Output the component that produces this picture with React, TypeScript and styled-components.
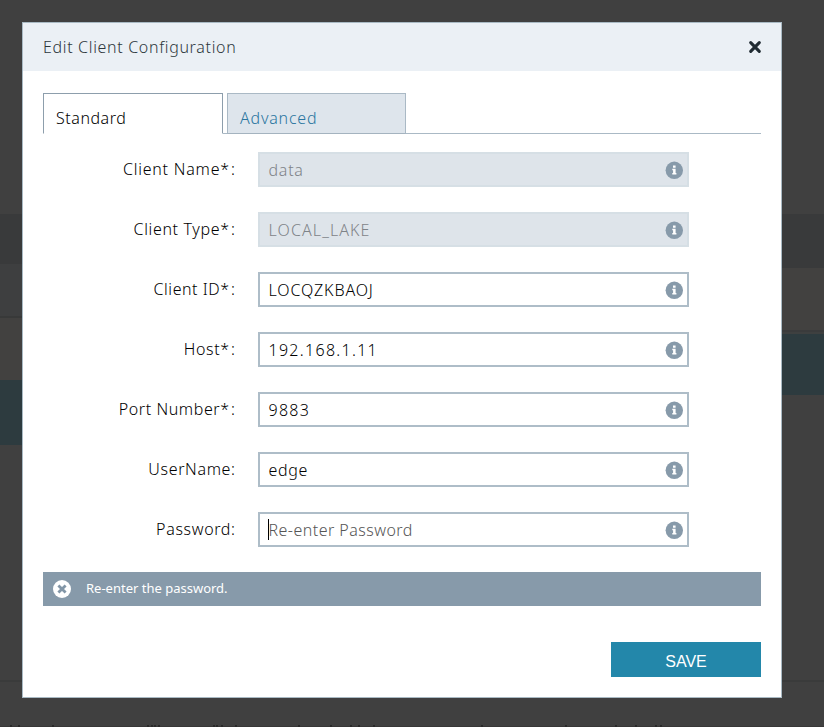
import React from "react";
import styled, { createGlobalStyle } from "styled-components";

const Global = createGlobalStyle`
  *, *::before, *::after { box-sizing: border-box; }
  body { margin: 0; overflow: hidden; background: #404040; font-family: "Noto Sans", "Open Sans", sans-serif; }
`;

const Page = styled.div`
  display: grid;
  width: 824px;
  height: 727px;
  overflow: hidden;
  background: #404040;
  > * { grid-area: 1 / 1; }
`;

const Backdrop = styled.div`
  display: grid;
  grid-template-columns: 1fr 1fr;
  grid-template-rows: 680px 2px 1fr;
  min-height: 0;
`;

const Pane = styled.div`
  display: flex;
  flex-direction: column;
`;

const Band = styled.div<{ $h: number; $c: string }>`
  flex: none;
  height: ${(p) => p.$h}px;
  background: ${(p) => p.$c};
`;

const Divider = styled.div`
  grid-column: 1 / -1;
  background: #3a3b3b;
`;

const Footnote = styled.svg`
  grid-column: 1 / -1;
  align-self: end;
  display: block;
`;

const Overlay = styled.div`
  z-index: 1;
  padding: 22px 42px 29px 22px;
  display: flex;
`;

const Dialog = styled.section`
  flex: 1;
  display: flex;
  flex-direction: column;
  background: #fff;
  border: 1px solid #a9bac4;
`;

const Header = styled.header`
  height: 48px;
  flex: none;
  display: flex;
  align-items: center;
  justify-content: space-between;
  padding: 0 19px 0 20px;
  background: #ebf0f5;
`;

const Text = styled.span<{ $ls?: number }>`
  letter-spacing: ${(p) => p.$ls ?? 0}px;
  white-space: pre;
`;

const Title = styled.h1`
  margin: 0;
  font-size: 16px;
  font-weight: 300;
  line-height: 24px;
  color: #2d373c;
`;

const IconButton = styled.button`
  border: 0;
  padding: 0;
  background: none;
  display: flex;
`;

const Body = styled.div`
  padding: 22px 20px 0;
  display: flex;
  flex-direction: column;
`;

const Tabs = styled.div`
  display: flex;
  height: 41px;
`;

const Tab = styled.button<{ $active?: boolean }>`
  width: ${(p) => (p.$active ? 180 : 179)}px;
  padding: 9px 12px 0;
  border: 1px solid ${(p) => (p.$active ? "#8d9eac" : "#aab9c5")};
  border-bottom-color: ${(p) => (p.$active ? "transparent" : "#a4b3bf")};
  background: ${(p) => (p.$active ? "#fff" : "#dee5ec")};
  color: ${(p) => (p.$active ? "#000" : "#2a75a0")};
  font: 300 16px/24px "Noto Sans", sans-serif;
  text-align: left;
`;

const TabGap = styled.div`
  width: 4px;
  border-bottom: 1px solid #aab9c5;
`;

const TabRest = styled(TabGap)`
  flex: 1;
`;

const Form = styled.div`
  display: flex;
  flex-direction: column;
  gap: 25px;
  padding-top: 18px;
`;

const Row = styled.div`
  display: grid;
  grid-template-columns: 192px 431px;
  column-gap: 23px;
  height: 35px;
`;

const Label = styled.label`
  text-align: right;
  font-size: 16px;
  font-weight: 300;
  line-height: 35px;
  color: #000;
`;

const Required = styled.span`
  margin-right: 2px;
`;

const Field = styled.div<{ $disabled?: boolean; $hint?: boolean }>`
  display: flex;
  align-items: center;
  justify-content: space-between;
  padding: 0 4px 0 8px;
  border: 2px solid ${(p) => (p.$disabled ? "#d6dfe5" : "#aebdc8")};
  background: ${(p) => (p.$disabled ? "#dee4ea" : "#fff")};
  color: ${(p) => (p.$disabled ? "#7e8388" : p.$hint ? "#555" : "#000")};
  font-size: 16px;
  font-weight: 300;
  line-height: 24px;
`;

const Value = styled.span`
  display: flex;
  align-items: center;
  padding-left: 0.5px;
`;

const Caret = styled.i`
  width: 1px;
  height: 21px;
  margin-left: -0.5px;
  margin-right: -0.5px;
  background: #000;
`;

const Alert = styled.div`
  margin-top: 25px;
  height: 34px;
  display: flex;
  align-items: center;
  gap: 15px;
  padding: 0 10px;
  background: #879aaa;
  color: #fff;
  font-size: 13px;
  font-weight: 400;
`;

const AlertText = styled.span`
  padding-bottom: 2px;
`;

const Save = styled.button`
  align-self: flex-end;
  margin-top: 36px;
  width: 150px;
  height: 35px;
  padding: 4px 0 0;
  border: 0;
  background: #2387aa;
  color: #fff;
  font: 400 16px/24px "Liberation Sans", Arial, sans-serif;
`;

const InfoIcon = () => (
  <svg width="18" height="18" viewBox="0 0 18 18">
    <circle cx="9.3" cy="9.3" r="8.7" fill="#879aaa" />
    <path d="M8 4.6h2.6v2.1H8zM7.3 7.8h3.3v4.3h.8v1.5H7.3v-1.5h.8V9.3h-.8z" fill="#fff" />
  </svg>
);

const CloseIcon = () => (
  <svg width="14" height="14" viewBox="0 0 14 14">
    <path d="M2.7 2.7l8.6 8.6M11.3 2.7l-8.6 8.6" stroke="#202b32" strokeWidth="3.1" strokeLinecap="round" />
  </svg>
);

const ErrorIcon = () => (
  <svg width="18" height="18" viewBox="0 0 18 18">
    <circle cx="9" cy="9" r="9" fill="#fff" />
    <path d="M5.4 5.4l7.2 7.2M12.6 5.4l-7.2 7.2" stroke="#8296a7" strokeWidth="2.8" strokeLinecap="butt" />
  </svg>
);

type RowData = {
  label: string;
  value: string;
  labelSpacing: number;
  valueSpacing: number;
  required?: boolean;
  disabled?: boolean;
  hint?: boolean;
};

const rows: RowData[] = [
  { label: "Client Name", value: "data", labelSpacing: 0.78, valueSpacing: 0.75, required: true, disabled: true },
  { label: "Client Type", value: "LOCAL_LAKE", labelSpacing: 0.66, valueSpacing: 1.1, required: true, disabled: true },
  { label: "Client ID", value: "LOCQZKBAOJ", labelSpacing: 0.55, valueSpacing: 0.88, required: true },
  { label: "Host", value: "192.168.1.11", labelSpacing: 0.65, valueSpacing: 1.3, required: true },
  { label: "Port Number", value: "9883", labelSpacing: 0.6, valueSpacing: 1.25, required: true },
  { label: "UserName", value: "edge", labelSpacing: 0.65, valueSpacing: 0.65 },
  { label: "Password", value: "Re-enter Password", labelSpacing: 0.65, valueSpacing: 0.46, hint: true },
];

const leftBands: [number, string][] = [
  [214, "#404040"], [50, "#393a3b"], [52, "#3e3f40"], [2, "#383939"], [62, "#424140"], [65, "#2d3b3f"],
];
const rightBands: [number, string][] = [
  [214, "#404040"], [54, "#393a3b"], [62, "#424140"], [2, "#3a3b3c"], [2, "#3e4040"], [61, "#2d3b3f"],
];
const footMarks = [10, 18, 52, 147, 151, 154, 158, 213, 216, 221, 235, 298, 330, 350, 358, 373, 481, 565, 615, 635, 655, 660];

export default function App() {
  return (
    <>
      <Global />
      <Page>
        <Backdrop>
          <Pane>{leftBands.map(([h, c], i) => <Band key={i} $h={h} $c={c} />)}</Pane>
          <Pane>{rightBands.map(([h, c], i) => <Band key={i} $h={h} $c={c} />)}</Pane>
          <Divider />
          <Footnote width="824" height="2">
            <path d="M0 1.5H824" stroke="#383737" />
            {footMarks.map((x) => <path key={x} d={`M${x} 1h2`} stroke="#292929" strokeWidth="2" />)}
          </Footnote>
        </Backdrop>
        <Overlay>
          <Dialog>
            <Header>
              <Title><Text $ls={0.67}>Edit Client Configuration</Text></Title>
              <IconButton aria-label="Close"><CloseIcon /></IconButton>
            </Header>
            <Body>
              <Tabs>
                <Tab $active><Text $ls={0.55}>Standard</Text></Tab>
                <TabGap />
                <Tab><Text $ls={0.8}>Advanced</Text></Tab>
                <TabRest />
              </Tabs>
              <Form>
                {rows.map((r) => (
                  <Row key={r.label}>
                    <Label>
                      <Text $ls={r.labelSpacing}>{r.label}</Text>
                      {r.required && <Required>*</Required>}:
                    </Label>
                    <Field $disabled={r.disabled} $hint={r.hint}>
                      <Value>
                        {r.hint && <Caret />}
                        <Text $ls={r.valueSpacing}>{r.value}</Text>
                      </Value>
                      <InfoIcon />
                    </Field>
                  </Row>
                ))}
              </Form>
              <Alert><ErrorIcon /><AlertText>Re-enter the password.</AlertText></Alert>
              <Save><Text>SAVE</Text></Save>
            </Body>
          </Dialog>
        </Overlay>
      </Page>
    </>
  );
}
